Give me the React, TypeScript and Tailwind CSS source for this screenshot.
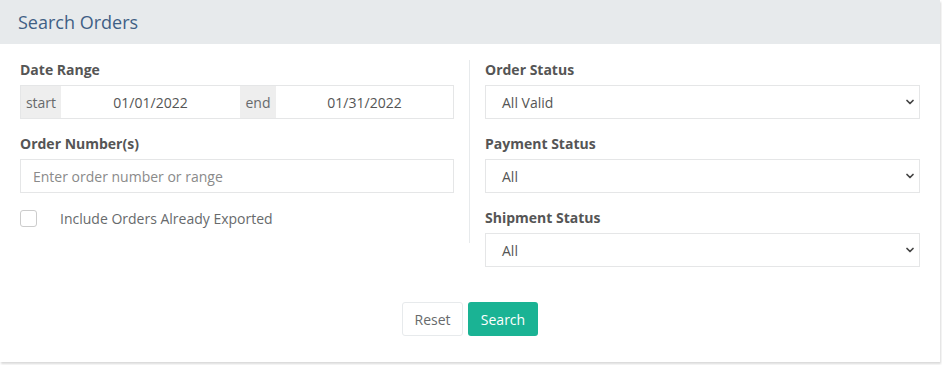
import { ChevronDown } from 'lucide-react';

const SELECTS = [
  { label: 'Order Status', value: 'All Valid' },
  { label: 'Payment Status', value: 'All' },
  { label: 'Shipment Status', value: 'All' },
];

function Label({ children }: { children: React.ReactNode }) {
  return <p className="text-[14px] font-bold text-[#555] leading-[20px] mb-[5px]">{children}</p>;
}

export default function App() {
  return (
    <div
      className="w-[942px] h-[365px] bg-white text-[#676a6c]"
      style={{ fontFamily: '"Open Sans", "Liberation Sans", sans-serif' }}
    >
      <div className="w-[940px] h-[362px] bg-white shadow-[1px_2px_2px_rgba(0,0,0,0.15)]">
        {/* Header */}
        <div className="h-[44px] bg-[#e7eaec] flex items-center px-[18px]">
          <h1 className="text-[18px] text-[#3f5f85] font-normal">Search Orders</h1>
        </div>

        {/* Body */}
        <div className="px-5 pt-[16px]">
          <div className="flex">
            {/* Left column */}
            <div className="w-[434px]">
              <Label>Date Range</Label>
              <div className="flex h-[34px] border border-[#e5e6e7] text-[14px]">
                <span className="w-[40px] bg-[#eee] flex items-center justify-center text-[#676a6c]">start</span>
                <span className="w-[179px] flex items-center justify-center text-[#555]">01/01/2022</span>
                <span className="w-[36px] bg-[#eee] flex items-center justify-center text-[#676a6c]">end</span>
                <span className="flex-1 flex items-center justify-center text-[#555]">01/31/2022</span>
              </div>

              <div className="mt-[15px]">
                <Label>Order Number(s)</Label>
                <div className="h-[34px] border border-[#e5e6e7] flex items-center px-3 text-[14px] text-[#8a8a8a]">
                  Enter order number or range
                </div>
              </div>

              <label className="mt-[15px] flex items-center h-[20px]">
                <span className="w-[17px] h-[17px] border border-[#ccc] rounded-[3px] bg-white" />
                <span className="ml-[23px] text-[14px] text-[#676a6c]">Include Orders Already Exported</span>
              </label>
            </div>

            {/* Divider */}
            <div className="w-px bg-[#e7eaec] mx-[15px] h-[183px]" />

            {/* Right column */}
            <div className="w-[435px] flex flex-col gap-[15px]">
              {SELECTS.map((s) => (
                <div key={s.label}>
                  <Label>{s.label}</Label>
                  <div className="h-[34px] border border-[#e5e6e7] flex items-center justify-between pl-[16px] pr-[3px] text-[14px] text-[#555]">
                    <span>{s.value}</span>
                    <ChevronDown size={12} strokeWidth={3.5} className="text-[#444]" />
                  </div>
                </div>
              ))}
            </div>
          </div>

          {/* Buttons */}
          <div className="flex justify-center gap-[5px] mt-[35px]">
            <button className="h-[34px] w-[61px] border border-[#e7eaec] rounded-[3px] bg-white text-[14px] text-[#676a6c]">
              Reset
            </button>
            <button className="h-[34px] w-[70px] rounded-[3px] bg-[#1ab394] text-[14px] text-white">
              Search
            </button>
          </div>
        </div>
      </div>
    </div>
  );
}
